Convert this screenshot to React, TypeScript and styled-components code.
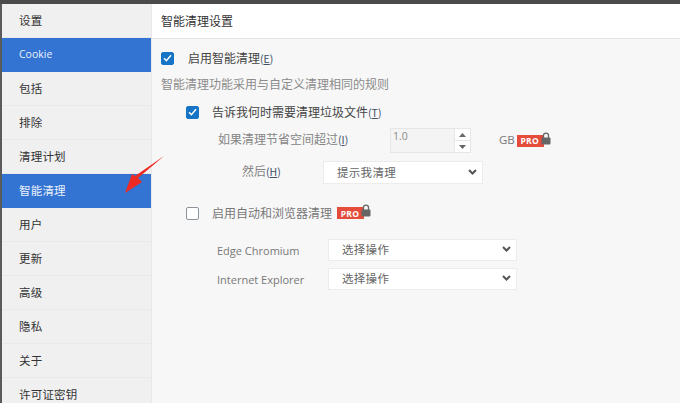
import React from "react";
import styled, { createGlobalStyle } from "styled-components";

const Global = createGlobalStyle`
  html, body { margin: 0; padding: 0; background: #f7f7f7; }
  body { font-family: "Noto Sans CJK SC", "Liberation Sans", sans-serif; overflow: hidden; }
  * { box-sizing: border-box; }
`;

const Page = styled.div`
  position: relative;
  width: 680px;
  height: 403px;
  overflow: hidden;
  border-top: 4px solid #4b4b4b;
  display: flex;
  background: #f7f7f7;
`;
const Sidebar = styled.nav`
  width: 152px;
  flex: none;
  border-left: 2px solid #5a5a5a;
  background: #f0f0f0;
  border-right: 1px solid #e8e8e8;
`;
const NavItem = styled.div<{ $active?: boolean; $latin?: boolean }>`
  height: 34px;
  padding: 0 0 2px 17px;
  display: flex;
  align-items: center;
  font-size: ${(p) => (p.$latin ? "10.5px" : "11.5px")};
  font-family: ${(p) => (p.$latin ? '"Open Sans", sans-serif' : "inherit")};
  letter-spacing: ${(p) => (p.$latin ? "0" : "0.2px")};
  color: ${(p) => (p.$active ? "#eaf1fb" : "#333")};
  background: ${(p) => (p.$active ? "#3373d1" : "transparent")};
  border-bottom: 1px solid ${(p) => (p.$active ? "#3373d1" : "#e9e9e9")};
`;
const Main = styled.main`
  flex: 1;
  min-width: 0;
  display: flex;
  flex-direction: column;
`;
const Header = styled.header`
  height: 35px;
  background: #fff;
  border-bottom: 1px solid #e4e4e4;
  padding: 0 0 2px 9px;
  display: flex;
  align-items: center;
  font-size: 12px;
  color: #333;
`;
const Content = styled.div`
  display: flex;
  flex-direction: column;
  padding: 12px 0 0 9px;
`;
const CheckRow = styled.label<{ $nested?: boolean; $top?: number }>`
  display: flex;
  align-items: center;
  height: 14px;
  margin-left: ${(p) => (p.$nested ? "25px" : "0")};
  margin-top: ${(p) => p.$top ?? 0}px;
  font-size: 12px;
  color: #444;
`;
const RowText = styled.span`
  position: relative;
  top: -1px;
`;
const Box = styled.span<{ $checked?: boolean; $gap: number }>`
  width: 13px;
  height: 13px;
  flex: none;
  margin-right: ${(p) => p.$gap}px;
  border-radius: 2px;
  display: flex;
  align-items: center;
  justify-content: center;
  background: ${(p) => (p.$checked ? "#1674c6" : "#fff")};
  border: 1px solid ${(p) => (p.$checked ? "#1674c6" : "#8c939b")};
`;
const Key = styled.span`
  font-size: 10.5px;
  color: #3f5068;
  & > u { text-underline-offset: 1px; }
`;
const Muted = styled(RowText)`
  color: #777;
`;
const Desc = styled.p<{ $top: number }>`
  margin: ${(p) => p.$top}px 0 0;
  font-size: 12px;
  line-height: 14px;
  color: #8b8b8b;
  position: relative;
  top: -1px;
`;
const SpinRow = styled.div`
  display: flex;
  align-items: center;
  margin: 9px 0 0 57px;
  height: 25px;
`;
const FieldLabel = styled.span<{ $w: number }>`
  width: ${(p) => p.$w}px;
  flex: none;
  padding-bottom: 4px;
  font-size: 12px;
  color: #858585;
`;
const Spin = styled.div`
  width: 81px;
  height: 25px;
  flex: none;
  display: flex;
  border: 1px solid #e6e6e6;
  background: #f4f4f4;
`;
const SpinValue = styled.span`
  flex: 1;
  padding: 0 0 0 2px;
  font: 10.5px/14px "Open Sans", sans-serif;
  color: #8b8b8b;
`;
const SpinBtns = styled.div`
  width: 16px;
  display: flex;
  flex-direction: column;
  border-left: 1px solid #e6e6e6;
  background: #fff;
`;
const SpinBtn = styled.span`
  flex: 1;
  display: flex;
  align-items: center;
  justify-content: center;
  & + & { border-top: 1px solid #e6e6e6; }
`;
const Unit = styled.span`
  margin-left: 28px;
  padding-bottom: 3px;
  font: 11.5px "Open Sans", sans-serif;
  color: #777;
`;
const Pro = styled.span<{ $left: number }>`
  display: inline-flex;
  align-items: center;
  margin-left: ${(p) => p.$left}px;
  height: 12px;
  width: 27px;
  flex: none;
  justify-content: center;
  padding-right: 1px;
  background: #e54c3c;
  color: #fff;
  font: bold 8.5px "Open Sans", sans-serif;
  letter-spacing: 0.3px;
`;
const Lock = styled.svg`
  flex: none;
  width: 10px;
  height: 13px;
  margin: -5px 0 0 -3px;
`;
const Select = styled.div<{ $w: number; $h: number }>`
  width: ${(p) => p.$w}px;
  height: ${(p) => p.$h}px;
  flex: none;
  display: flex;
  align-items: center;
  justify-content: space-between;
  padding: 0 5px 2px 13px;
  background: #fff;
  border: 1px solid #ececec;
  font-size: 11.5px;
  color: #666;
  letter-spacing: 0.3px;
`;
const SelectRow = styled.div<{ $left: number; $top: number }>`
  display: flex;
  align-items: center;
  margin: ${(p) => p.$top}px 0 0 ${(p) => p.$left}px;
`;
const Engine = styled.span`
  width: 111px;
  flex: none;
  font: 11px "Open Sans", sans-serif;
  color: #777;
`;
const Arrow = styled.svg`
  position: absolute;
  left: 122px;
  top: 151px;
  width: 44px;
  height: 40px;
`;

const Check = () => (
  <svg width="9" height="8" viewBox="0 0 9 8">
    <path d="M1 4.2 3.4 6.6 8 1.2" fill="none" stroke="#fff" strokeWidth="1.4" />
  </svg>
);
const Chevron = () => (
  <svg width="9" height="6" viewBox="0 0 9 6">
    <path d="M1 1 4.5 4.5 8 1" fill="none" stroke="#555" strokeWidth="2" />
  </svg>
);
const ProLock = ({ left }: { left: number }) => (
  <>
    <Pro $left={left}>PRO</Pro>
    <Lock viewBox="0 0 10 13">
      <path d="M2.5 6V3.6a2.5 2.5 0 0 1 5 0V6" fill="none" stroke="#666" strokeWidth="1.3" />
      <rect x="0.5" y="5.5" width="9" height="7" rx="1" fill="#666" />
    </Lock>
  </>
);

const items = ["设置", "Cookie", "包括", "排除", "清理计划", "智能清理", "用户", "更新", "高级", "隐私", "关于", "许可证密钥"];

export default function App() {
  return (
    <Page>
      <Global />
      <Sidebar>
        {items.map((t) => (
          <NavItem key={t} $active={t === "Cookie" || t === "智能清理"} $latin={t === "Cookie"}>
            {t}
          </NavItem>
        ))}
      </Sidebar>
      <Main>
        <Header>智能清理设置</Header>
        <Content>
          <CheckRow>
            <Box $checked $gap={14}><Check /></Box>
            <RowText>启用智能清理<Key>(<u>E</u>)</Key></RowText>
          </CheckRow>
          <Desc $top={13}>智能清理功能采用与自定义清理相同的规则</Desc>
          <CheckRow $nested $top={13}>
            <Box $checked $gap={13}><Check /></Box>
            <RowText>告诉我何时需要清理垃圾文件<Key>(<u>T</u>)</Key></RowText>
          </CheckRow>
          <SpinRow>
            <FieldLabel $w={172}>如果清理节省空间超过<Key>(<u>I</u>)</Key></FieldLabel>
            <Spin>
              <SpinValue>1.0</SpinValue>
              <SpinBtns>
                <SpinBtn>
                  <svg width="7" height="4" viewBox="0 0 7 4"><path d="M3.5 0 7 4H0z" fill="#666" /></svg>
                </SpinBtn>
                <SpinBtn>
                  <svg width="7" height="4" viewBox="0 0 7 4"><path d="M0 0h7L3.5 4z" fill="#666" /></svg>
                </SpinBtn>
              </SpinBtns>
            </Spin>
            <Unit>GB</Unit>
            <ProLock left={2} />
          </SpinRow>
          <SelectRow $left={81} $top={8}>
            <FieldLabel $w={81}>然后<Key>(<u>H</u>)</Key></FieldLabel>
            <Select $w={160} $h={23}>提示我清理<Chevron /></Select>
          </SelectRow>
          <CheckRow $nested $top={22}>
            <Box $gap={13} />
            <Muted>启用自动和浏览器清理</Muted>
            <ProLock left={5} />
          </CheckRow>
          <SelectRow $left={56} $top={19}>
            <Engine>Edge Chromium</Engine>
            <Select $w={189} $h={22}>选择操作<Chevron /></Select>
          </SelectRow>
          <SelectRow $left={56} $top={7}>
            <Engine>Internet Explorer</Engine>
            <Select $w={189} $h={22}>选择操作<Chevron /></Select>
          </SelectRow>
        </Content>
      </Main>
      <Arrow viewBox="0 0 44 40">
        <path d="M42 1 16 23 20 27 3 38 10 19 13 21z" fill="#ee2a24" />
      </Arrow>
    </Page>
  );
}
